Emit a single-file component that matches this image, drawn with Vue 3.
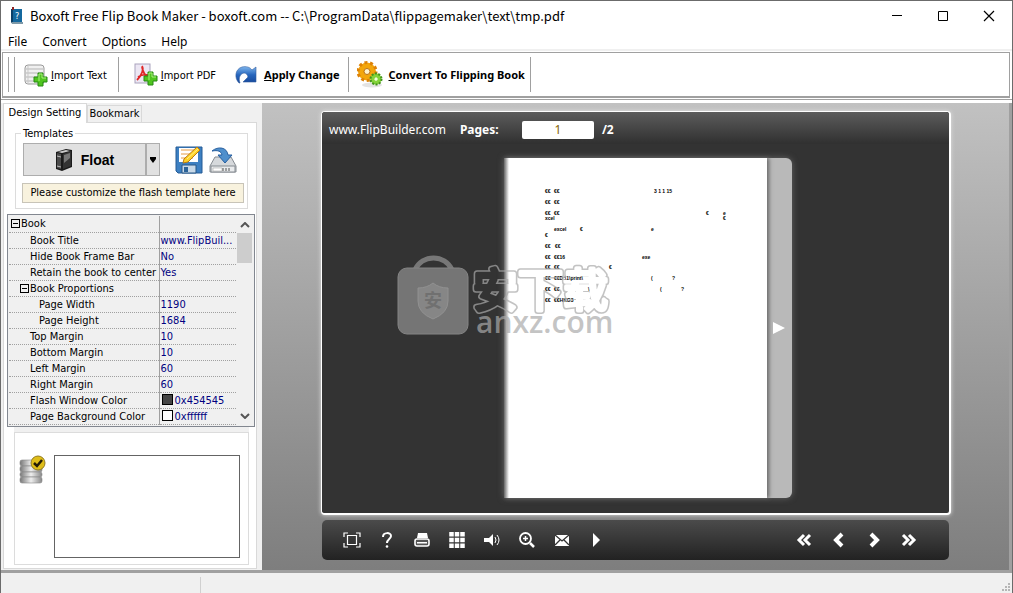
<script setup>
import { ref } from 'vue'

const pageNumber = ref('1')
const menus = ['File', 'Convert', 'Options', 'Help']
const rows = [
  { name: 'Book', level: 0, group: true, value: '' },
  { name: 'Book Title', level: 1, value: 'www.FlipBuil...' },
  { name: 'Hide Book Frame Bar', level: 1, value: 'No' },
  { name: 'Retain the book to center', level: 1, value: 'Yes' },
  { name: 'Book Proportions', level: 1, group: true, value: '' },
  { name: 'Page Width', level: 2, value: '1190' },
  { name: 'Page Height', level: 2, value: '1684' },
  { name: 'Top Margin', level: 1, value: '10' },
  { name: 'Bottom Margin', level: 1, value: '10' },
  { name: 'Left Margin', level: 1, value: '60' },
  { name: 'Right Margin', level: 1, value: '60' },
  { name: 'Flash Window Color', level: 1, value: '0x454545', swatch: 'dark' },
  { name: 'Page Background Color', level: 1, value: '0xffffff', swatch: 'light' }
]
const pageText = [
  [41, 35, '€€'], [50, 35, '€€'], [150, 35, '3 1 1 15'],
  [41, 46, '€€'], [50, 46, '€€'],
  [41, 57, '€€'], [50, 57, '€€'], [202, 57, '€'], [219, 57, 'e'],
  [41, 62, 'xcel'], [219, 62, '€'],
  [50, 73, 'excel'], [76, 73, '€'], [147, 73, 'e'],
  [41, 79, '€'],
  [41, 90, '€€'], [51, 90, '€€'],
  [41, 101, '€€'], [50, 101, '€€16'], [138, 101, 'exe'],
  [41, 111, '€€'], [50, 111, '€€'], [105, 111, '€'],
  [41, 122, '€€'], [50, 122, '€€D:\\1\\print\\'], [147, 122, '('], [168, 122, '?'],
  [41, 133, '€€'], [50, 133, '€€'], [84, 133, '\\'], [156, 133, '('], [177, 133, '?'],
  [41, 144, '€€'], [50, 144, '€€HKG3']
]
</script>

<template>
  <div class="window">
    <header class="titlebar">
      <svg class="app-icon" width="14" height="18" viewBox="0 0 14 18">
        <path d="M1 2h11v14H1z" fill="#14689e" />
        <path d="M1 2h2v14H1z" fill="#0b3f68" />
        <path d="M1 15h12v2H2z" fill="#7e99a8" />
        <path d="M2 0h2v3H2z" fill="#8f2424" />
        <text x="5" y="12" font-size="9" fill="#fff">?</text>
      </svg>
      <h1>Boxoft Free Flip Book Maker - boxoft.com -- C:\ProgramData\flippagemaker\text\tmp.pdf</h1>
      <div class="window-buttons">
        <button aria-label="Minimize"><svg width="12" height="12"><path d="M1 5.500h10" stroke="#000" /></svg></button>
        <button aria-label="Maximize"><svg width="12" height="12"><path d="M1.500 1.500h9v9h-9z" fill="none" stroke="#000" /></svg></button>
        <button aria-label="Close"><svg width="12" height="12"><path d="M1 1l10 10M11 1L1 11" stroke="#000" stroke-width="1.200" /></svg></button>
      </div>
    </header>

    <nav class="menubar">
      <button v-for="m in menus" :key="m">{{ m }}</button>
    </nav>

    <div class="toolbar">
      <span class="grip"></span>
      <button class="tool">
        <svg width="24" height="24" viewBox="0 0 24 24">
          <rect x="1" y="2" width="19" height="19" rx="3" fill="#f0f0f0" stroke="#999" />
          <path d="M2 6h17M2 10h17M2 14h17M2 18h17" stroke="#b5b5b5" />
          <path d="M4 3v18" stroke="#c9c9c9" />
          <path d="M14 10h5v4h4v5h-4v4h-5v-4h-4v-5h4z" fill="#4fc41f" stroke="#268a12" />
          <path d="M15 18v-7h3v4h4" fill="none" stroke="#a9f07c" />
        </svg>
        <span><u>I</u>mport Text</span>
      </button>
      <span class="sep"></span>
      <button class="tool pdf">
        <svg width="24" height="24" viewBox="0 0 24 24">
          <rect x="1" y="1" width="15" height="19" fill="#ece7f4" stroke="#aaa3bd" />
          <path d="M8 3c2 3 0 9-5 14M8 4c1 6 3 9 7 11M4 14c3-2 6-3 10-2" fill="none" stroke="#df2727" stroke-width="1.800" />
          <path d="M14 9h5v4h4v5h-4v4h-5v-4h-4v-5h4z" fill="#4fc41f" stroke="#268a12" />
          <path d="M15 17v-7h3v4h4" fill="none" stroke="#a9f07c" />
        </svg>
        <span><u>I</u>mport PDF</span>
      </button>
      <button class="tool strong apply">
        <svg width="24" height="24" viewBox="0 0 24 24">
          <defs><linearGradient id="blueArrow" x2="0" y2="1"><stop stop-color="#7eb6ee" /><stop offset=".5" stop-color="#2766bd" /><stop offset="1" stop-color="#16479a" /></linearGradient></defs>
          <path d="M5 20C0 15 1 6 8 4c4-1 8 0 10 3l4-3v15H9l5-5c-1-5-6-5-8-1-1 2-1 4 0 7z" fill="url(#blueArrow)" stroke="#315c9e" stroke-width=".6" />
        </svg>
        <span><u>A</u>pply Change</span>
      </button>
      <span class="sep"></span>
      <button class="tool strong">
        <svg width="26" height="28" viewBox="0 0 26 28">
          <ellipse cx="15" cy="24" rx="10" ry="2.500" fill="#e3e3e3" />
          <circle cx="10" cy="10.500" r="6" fill="none" stroke="#f3a60c" stroke-width="6" />
          <circle cx="10" cy="10.500" r="9" fill="none" stroke="#dd8208" stroke-width="3" stroke-dasharray="3 2.650" />
          <circle cx="10" cy="10.500" r="3" fill="#fff3cc" stroke="#b96c0a" />
          <circle cx="19" cy="18" r="3.500" fill="none" stroke="#83d339" stroke-width="4" />
          <circle cx="19" cy="18" r="5.500" fill="none" stroke="#42931c" stroke-width="2" stroke-dasharray="2 1.450" />
          <circle cx="19" cy="18" r="1.500" fill="#efffdc" />
        </svg>
        <span><u>C</u>onvert To Flipping Book</span>
      </button>
      <span class="sep last"></span>
    </div>

    <main class="workspace">
      <aside class="settings">
        <div class="tabs" role="tablist">
          <button class="tab active" role="tab" aria-selected="true">Design Setting</button>
          <button class="tab" role="tab" aria-selected="false">Bookmark</button>
        </div>
        <div class="tab-page">
          <fieldset class="templates">
            <legend>Templates</legend>
            <div class="template-row">
              <button class="float-button">
                <svg width="18" height="24" viewBox="0 0 18 24">
                  <path d="M1 4l10-3 6 1v17l-10 4-6-2z" fill="#1b1b1b" />
                  <path d="M2 5l4 1v15l-4-1z" fill="#4a4a4a" />
                  <path d="M8 6l8-3v15l-8 3z" fill="#333" />
                  <path d="M9 7l6-2v5l-6 5z" fill="#777" />
                  <path d="M3 4l8-2 4 1-8 2z" fill="#ccc" />
                  <path d="M2 8l4 1M2 18l4 1" stroke="#bbb" />
                </svg>
                Float
              </button>
              <button class="float-arrow" aria-label="Choose template"><svg width="8" height="6"><path d="M1 0h6v2L4 6 1 2z" /></svg></button>
              <button class="icon-button save" aria-label="Save template">
                <svg width="28" height="28" viewBox="0 0 28 28">
                  <path d="M1 1h26v26H3l-2-2z" fill="#3d80c2" stroke="#245b95" />
                  <path d="M4 2h19v14H4z" fill="#fff" />
                  <path d="M6 4h15M6 8h14M6 12h12" stroke="#e89d43" />
                  <path d="M7 19h14v8H7z" fill="#c8d9e8" stroke="#275686" />
                  <path d="M9 21h4v5H9z" fill="#2b6398" />
                  <path d="M9 13L22 1l3 3-12 12-5 1z" fill="#ffd326" stroke="#b97a12" />
                  <path d="M12 13L23 3" stroke="#fff08a" />
                </svg>
              </button>
              <button class="icon-button" aria-label="Load template">
                <svg width="28" height="28" viewBox="0 0 28 28">
                  <path d="M6 11h16l5 9v6H1v-6z" fill="#d6d9dc" stroke="#858b91" />
                  <path d="M2 20h24v6H2z" fill="#e9ebed" stroke="#858b91" />
                  <path d="M4 22h9v3H4z" fill="#fff" stroke="#999" stroke-width=".5" />
                  <path d="M14 22v3M17 22v3M20 22v3" stroke="#555" />
                  <path d="M3 5C9 0 18 1 19 9h4l-7 8-7-8h4c-1-4-4-5-10-4z" fill="#4f8fcc" stroke="#285f9f" />
                </svg>
              </button>
            </div>
            <p class="hint">Please customize the flash template here</p>
          </fieldset>

          <div class="property-grid">
            <table>
              <colgroup><col class="name-col" /><col /></colgroup>
              <tbody>
                <tr v-for="row in rows" :key="row.name">
                  <th scope="row" :class="['level-' + row.level, { group: row.group }]">
                    <span v-if="row.group" class="collapse"></span>{{ row.name }}
                  </th>
                  <td><span v-if="row.swatch" :class="['swatch', row.swatch]"></span>{{ row.value }}</td>
                </tr>
              </tbody>
            </table>
            <div class="scrollbar">
              <svg width="10" height="6"><path d="M1 5l4-4 4 4" fill="none" stroke="#555" stroke-width="2" /></svg>
              <span class="thumb"></span>
              <svg class="down" width="10" height="6"><path d="M1 1l4 4 4-4" fill="none" stroke="#555" stroke-width="2" /></svg>
            </div>
          </div>

          <div class="output">
            <svg width="28" height="30" viewBox="0 0 28 30">
              <defs><linearGradient id="disk"><stop stop-color="#777" /><stop offset=".5" stop-color="#eee" /><stop offset="1" stop-color="#888" /></linearGradient></defs>
              <g fill="url(#disk)" stroke="#888" stroke-width=".6">
                <rect x="1" y="5" width="22" height="6" rx="2" /><rect x="1" y="11" width="22" height="6" rx="2" />
                <rect x="1" y="17" width="22" height="5" rx="2" /><rect x="1" y="22" width="22" height="6" rx="2" />
              </g>
              <circle cx="19" cy="8" r="7" fill="#dfbd19" stroke="#927b21" />
              <path d="M15 8l3 3 5-6" fill="none" stroke="#231b06" stroke-width="2.500" />
            </svg>
            <div class="output-box"></div>
          </div>
        </div>
      </aside>

      <section class="preview">
        <div class="viewer">
          <div class="viewer-head">
            <a href="#">www.FlipBuilder.com</a>
            <label for="page-number">Pages:</label>
            <input id="page-number" v-model="pageNumber" type="text" />
            <b>/2</b>
          </div>
          <div class="stage">
            <div class="book">
              <svg class="page" viewBox="0 0 263 340" preserveAspectRatio="xMinYMin meet">
                <text v-for="(t, i) in pageText" :key="i" :x="t[0]" :y="t[1]">{{ t[2] }}</text>
              </svg>
              <button class="turn" aria-label="Turn page"><svg width="14" height="14"><path d="M1 1l12 6-12 6z" fill="#fff" /></svg></button>
            </div>
            <svg class="watermark" width="230" height="100" viewBox="0 0 230 100">
              <defs>
                <mask id="outline" maskUnits="userSpaceOnUse" x="70" y="0" width="150" height="70">
                  <text class="cjk" x="77" y="56" stroke="#fff" stroke-width="7" fill="#fff">安下载</text>
                  <text class="cjk" x="77" y="56" stroke="#000" stroke-width="4" fill="#000">安下载</text>
                </mask>
              </defs>
              <path d="M19 19C26 3 49 3 56 19" fill="none" stroke="#777" stroke-width="5" />
              <rect x="2" y="17" width="70" height="66" rx="9" fill="#757575" stroke="#858585" />
              <path d="M22 37q9 0 15-5 6 5 15 5v13q0 12-15 18-15-6-15-18z" fill="#868686" stroke="#919191" />
              <text class="seal" x="28" y="56">安</text>
              <rect x="70" y="0" width="150" height="70" fill="#aaa" fill-opacity=".7" mask="url(#outline)" />
              <text class="site" x="80" y="82">anxz.com</text>
            </svg>
          </div>
        </div>

        <div class="controls">
          <button aria-label="Full screen"><svg width="18" height="16" viewBox="0 0 18 16"><path d="M1 5V1h4M13 1h4v4M17 11v4h-4M5 15H1v-4M4.500 3.500h9v9h-9z" fill="none" stroke="#fff" stroke-width="1.200" /></svg></button>
          <button aria-label="Help"><svg width="18" height="18" viewBox="0 0 18 18"><path d="M5 6c0-5 8-5 8-1 0 3-4 3-4 7" fill="none" stroke="#fff" stroke-width="2" /><circle cx="9" cy="15.500" r="1.300" fill="#fff" /></svg></button>
          <button aria-label="Print"><svg width="18" height="16" viewBox="0 0 18 16"><path d="M5 1h9l1 5H4z" fill="#fff" /><rect x="2" y="7" width="14" height="7" rx="2" fill="#555" stroke="#fff" stroke-width="1.600" /><path d="M4 10h10v1.500H4z" fill="#fff" /></svg></button>
          <button aria-label="Thumbnails"><svg width="18" height="18" viewBox="0 0 18 18"><path d="M3.500 1v16M9 1v16M14.500 1v16" stroke="#fff" stroke-width="4.500" stroke-dasharray="4.500 1.200" /></svg></button>
          <button aria-label="Sound"><svg width="18" height="16" viewBox="0 0 18 16"><path d="M1 6h5l4-4v12l-4-4H1z" fill="#fff" /><path d="M12 5q2 3 0 6M14 3q4 5 0 10" fill="none" stroke="#fff" /></svg></button>
          <button aria-label="Zoom in"><svg width="18" height="18" viewBox="0 0 18 18"><circle cx="7.500" cy="7.500" r="5.500" fill="none" stroke="#fff" stroke-width="1.800" /><path d="M7.500 5v5M5 7.500h5" stroke="#fff" stroke-width="1.500" /><path d="M12 12l4 4" stroke="#fff" stroke-width="2.500" /></svg></button>
          <button aria-label="Mail"><svg width="18" height="16" viewBox="0 0 18 16"><path d="M2 3h14v11H2z" fill="#fff" /><path d="M2 3l7 6 7-6M2 13l5-5M16 13l-5-5" fill="none" stroke="#333" stroke-width="1.300" /></svg></button>
          <button aria-label="Auto play"><svg width="18" height="16" viewBox="0 0 18 16"><path d="M5 1l7 7-7 7z" fill="#fff" /></svg></button>
          <span class="spacer"></span>
          <button aria-label="First page"><svg width="18" height="16" viewBox="0 0 18 16"><path d="M9 3L4 8l5 5M15 3l-5 5 5 5" /></svg></button>
          <button aria-label="Previous page"><svg width="18" height="16" viewBox="0 0 18 16"><path class="heavy" d="M12 2L6 8l6 6" /></svg></button>
          <button aria-label="Next page"><svg width="18" height="16" viewBox="0 0 18 16"><path class="heavy" d="M6 2l6 6-6 6" /></svg></button>
          <button aria-label="Last page"><svg width="18" height="16" viewBox="0 0 18 16"><path d="M3 3l5 5-5 5M9 3l5 5-5 5" /></svg></button>
        </div>
      </section>
    </main>

    <footer class="statusbar">
      <span class="status-cell"></span>
      <svg width="10" height="10" viewBox="0 0 10 10"><path d="M7 0h2v2H7zM4 3h2v2H4zM7 3h2v2H7zM1 6h2v2H1zM4 6h2v2H4zM7 6h2v2H7z" fill="#b5b5b5" /></svg>
    </footer>
  </div>
</template>

<style>
body { margin: 0; }
</style>

<style scoped>
* { box-sizing: border-box; }
button { font: inherit; color: inherit; border: 0; padding: 0; background: none; }
svg { display: block; flex: none; }
.window { display: flex; flex-direction: column; min-height: 100vh; border: 1px solid #6b6b6b; background: #fff; color: #000; font: 11px/16px "DejaVu Sans Condensed", "Noto Sans", sans-serif; }
.titlebar { display: flex; align-items: center; height: 29px; padding-left: 9px; }
.app-icon { margin-right: 6px; }
.titlebar h1 { margin: 0; font: 13px/18px "Noto Sans CJK SC", "Noto Sans", sans-serif; white-space: nowrap; }
.window-buttons { display: flex; margin-left: auto; }
.window-buttons button { display: grid; place-items: center; width: 46px; height: 28px; }
.menubar { display: flex; gap: 15px; height: 21px; padding-left: 7px; border-bottom: 2px solid #f0f0f0; font: 12px/20px "Noto Sans", sans-serif; }
.menubar button { padding-top: 2px; }
.toolbar { display: flex; align-items: center; height: 46px; margin: 1px 2px 0 1px; padding-left: 5px; border: 1px solid #a0a0a0; border-bottom-width: 2px; white-space: nowrap; }
.grip { width: 7px; height: 35px; margin-right: 9px; border: 1px solid #a0a0a0; border-width: 0 1px; }
.tool { display: flex; align-items: center; gap: 3px; }
.tool span { padding-top: 2px; }
.tool.strong { gap: 6px; font: 700 11px/16px "Noto Sans", sans-serif; }
.tool.strong span { padding-top: 1px; }
.sep { width: 1px; height: 35px; margin: 0 8px 0 11px; background: #a0a0a0; }
.sep.last { margin-left: 5px; }
.pdf { margin: 0 18px 0 7px; }
.apply + .sep { margin-left: 8px; }
.workspace { display: flex; flex: 1; margin-top: 1px; border-top: 1px solid #a0a0a0; border-bottom: 3px solid #a0a0a0; padding-top: 3px; }
.settings { display: flex; flex-direction: column; width: 261px; flex: none; padding: 0 5px 1px 2px; background: #f0f0f0; }
.tabs { display: flex; align-items: flex-end; height: 19px; }
.tab { width: 55px; height: 17px; border: 1px solid #d9d9d9; border-bottom: 0; background: #f0f0f0; white-space: nowrap; line-height: 16px; }
.tab.active { width: 84px; height: 20px; margin-bottom: -1px; background: #fff; position: relative; line-height: 16px; padding-bottom: 2px; }
.tab-page { flex: 1; display: flex; flex-direction: column; padding: 4px 1px 3px 3px; border: 1px solid #d9d9d9; background: #fff; }
.templates { margin: 0 7px 5px 8px; padding: 3px 3px 5px 7px; border: 1px solid #dcdcdc; min-width: 0; }
.templates legend { padding: 0 2px; margin-left: -2px; line-height: 13px; }
.template-row { display: flex; align-items: center; }
.float-button { display: flex; align-items: center; justify-content: center; gap: 8px; width: 123px; height: 33px; border: 1px solid #adadad; background: #e1e1e1; font: 700 14px/18px "Liberation Sans", sans-serif; }
.float-arrow { display: grid; place-items: center; width: 14px; height: 33px; border: 1px solid #adadad; background: #e1e1e1; }
.icon-button { margin-left: 6px; }
.save { margin-left: 15px; }
.hint { margin: 7px 0 0 -1px; border: 1px solid #c8c4b8; background: #f8f2de; text-align: center; line-height: 18px; white-space: nowrap; }
.property-grid { display: flex; border: 1px solid #828790; background: #f0f0f0; padding: 1px 1px 1px; }
table { flex: 1; width: 0; border-collapse: collapse; table-layout: fixed; }
.name-col { width: 150px; }
th, td { height: 16px; padding: 0; line-height: 15px; border-bottom: 1px dotted #a0a0a0; white-space: nowrap; overflow: hidden; text-align: left; font-weight: 400; }
th { border-right: 1px solid #a0a0a0; }
td { padding-left: 1px; color: #000080; }
.level-0 { padding-left: 2px; }
.level-1 { padding-left: 21px; }
.level-2 { padding-left: 30px; }
.level-1.group { padding-left: 11px; }
.collapse { display: inline-block; width: 9px; height: 9px; margin-right: 1px; border: 1px solid #000; background: linear-gradient(#000, #000) center / 5px 1px no-repeat; vertical-align: -1px; }
.swatch { display: inline-block; width: 11px; height: 11px; margin: 0 2px 0 1px; border: 1px solid #000; vertical-align: -1px; }
.dark { background: #454545; }
.light { background: #fff; }
.scrollbar { display: flex; flex-direction: column; align-items: center; width: 17px; padding: 6px 0; }
.thumb { width: 15px; height: 30px; margin-top: 5px; background: #cdcdcd; }
.down { margin-top: auto; }
.output { display: flex; flex: 1; margin: 5px 6px 0 7px; padding: 22px 8px 6px 4px; border: 1px solid #dcdcdc; box-shadow: 0 -5px 0 #f0f0f0; }
.output-box { flex: 1; min-height: 103px; margin-left: 7px; border: 1px solid #646464; }
.preview { display: flex; flex-direction: column; flex: 1; min-width: 0; padding: 8px 58px 10px 59px; border-right: 3px solid #a0a0a0; background: linear-gradient(#c1c1c1, #7e7e7e); }
.viewer { display: flex; flex-direction: column; flex: 1; border: 2px solid #fff; border-top-width: 1px; border-left-width: 1px; border-radius: 4px; background: #333; box-shadow: 0 0 4px #e0e0e0; }
.viewer-head { display: flex; align-items: center; height: 32px; padding: 3px 7px 0; background: linear-gradient(#5c5c5c, #303030); color: #fff; font: 12px/16px "Noto Sans", sans-serif; border-radius: 3px 3px 0 0; }
.viewer-head a { color: #fff; text-decoration: none; }
.viewer-head label { width: 62px; margin-left: 14px; font-weight: 700; }
.viewer-head input { width: 72px; height: 18px; padding: 0; border: 0; border-radius: 2px; background: #fff; color: #856404; text-align: center; font: 12px/18px "Noto Sans", sans-serif; }
.viewer-head b { margin-left: 8px; }
.stage { position: relative; display: flex; flex: 1; justify-content: center; padding: 14px 0 15px 24px; }
.book { display: flex; height: 340px; background: #b9b9b9; border-radius: 0 6px 6px 0; box-shadow: 0 0 6px #666; }
.page { width: 263px; height: 340px; background: linear-gradient(90deg, #666, #fff 5px); box-shadow: 2px 0 4px #666; font: 700 5px "Liberation Sans", sans-serif; }
.turn { width: 25px; display: flex; align-items: center; padding-left: 5px; }
.watermark { position: absolute; left: 74px; top: 107px; }
.cjk { font: 45px "Noto Sans CJK SC", sans-serif; stroke-linejoin: round; }
.seal { font: 700 18px "Noto Sans CJK SC", sans-serif; fill: #707070; }
.site { font: 600 30px "Open Sans", sans-serif; fill: #aaa; fill-opacity: .7; }
.controls { display: flex; align-items: center; gap: 17px; height: 40px; margin: 5px 2px 0 1px; padding: 0 31px 0 21px; border-radius: 5px; background: linear-gradient(#4b4b4b, #222); }
.spacer { flex: 1; }
.spacer ~ button path { fill: none; stroke: #fff; stroke-width: 3; }
.spacer ~ button .heavy { stroke-width: 4; }
.statusbar { display: flex; justify-content: space-between; align-items: flex-end; height: 20px; padding: 2px 1px 0; background: #f0f0f0; }
.status-cell { width: 199px; height: 16px; border-right: 1px solid #d0d0d0; }
</style>
